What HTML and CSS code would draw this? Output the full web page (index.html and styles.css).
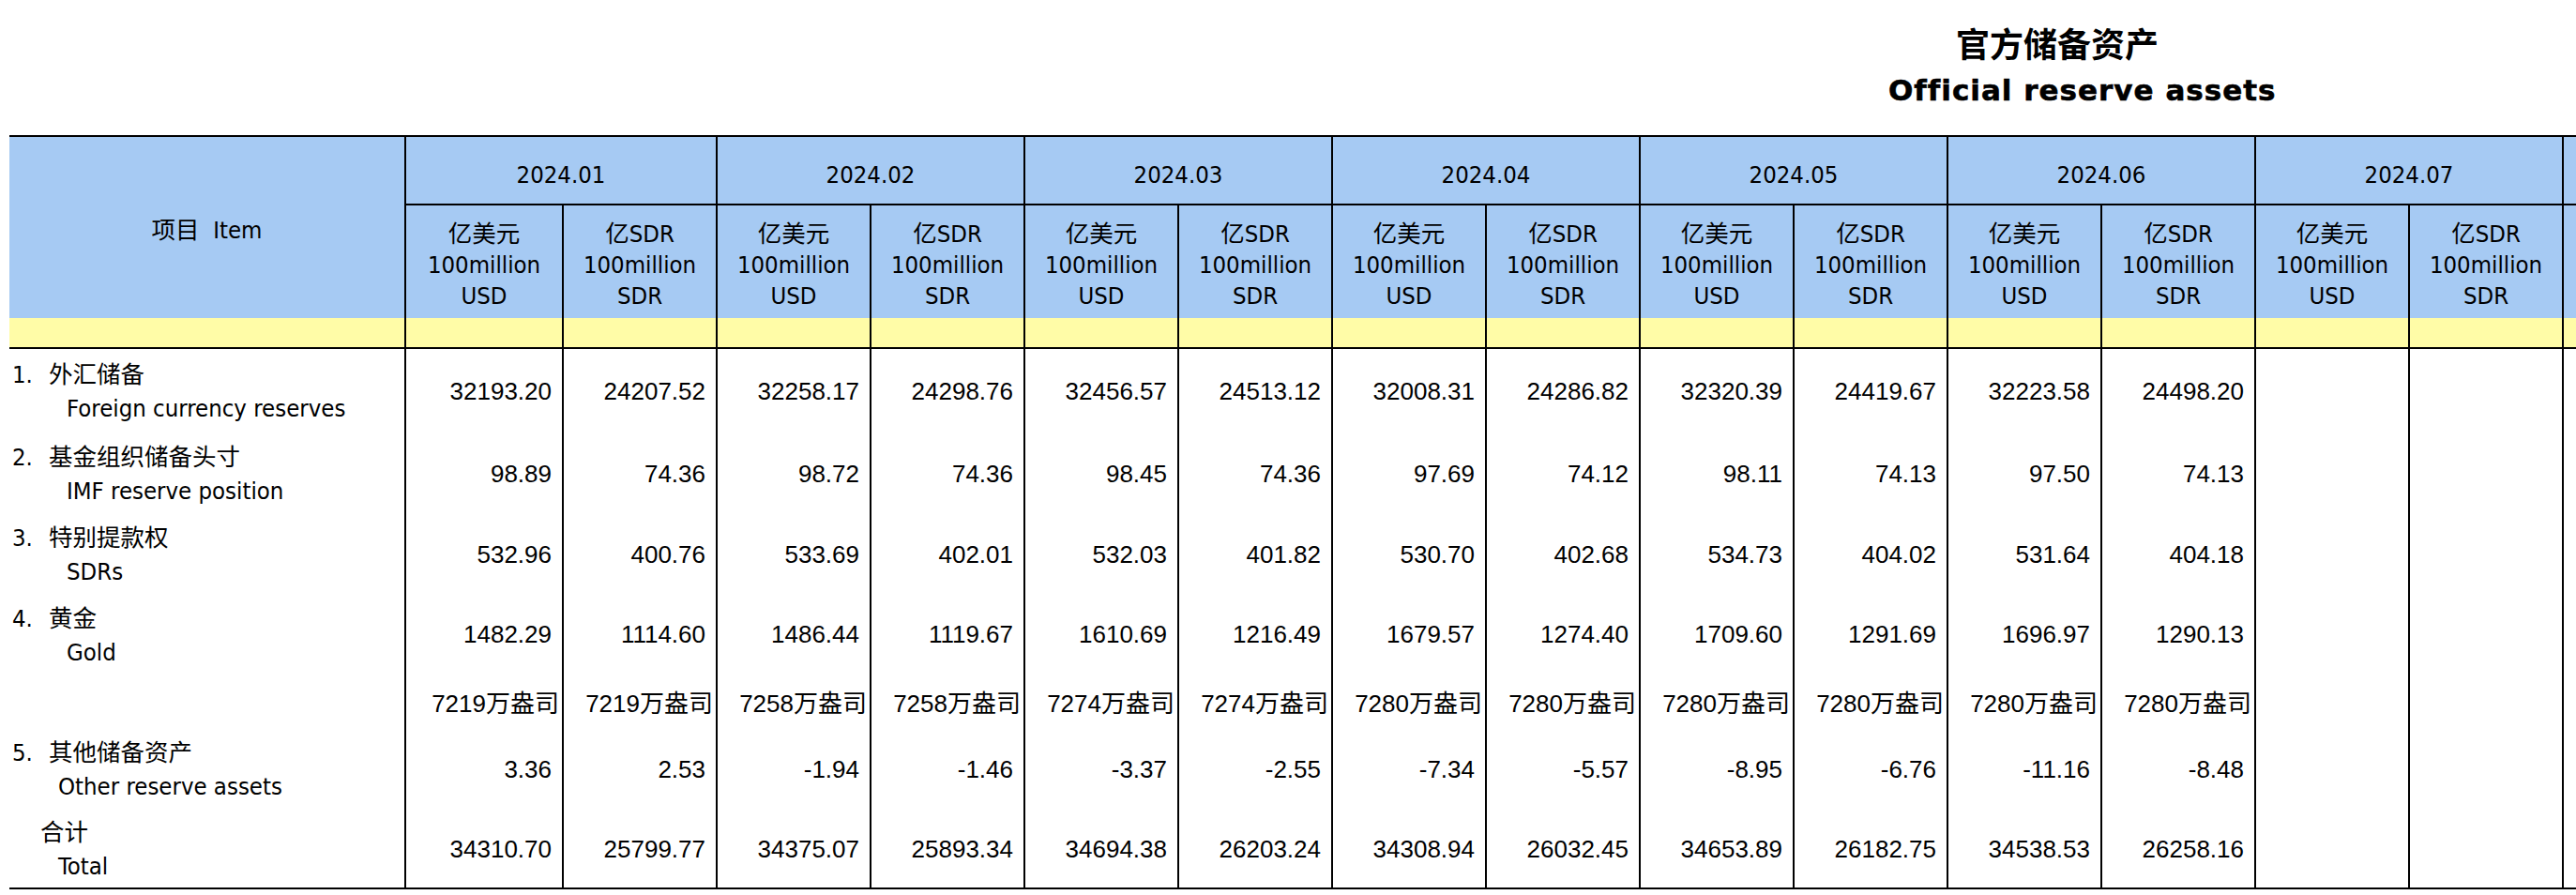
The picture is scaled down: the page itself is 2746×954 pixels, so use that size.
FILE: index.html
```html
<!DOCTYPE html>
<html lang="zh-CN">
<head>
<meta charset="utf-8">
<title>官方储备资产 Official reserve assets</title>
<link rel="stylesheet" href="styles.css">
</head>
<body>
<header class="title">
  <div class="title-cn">官方储备资产</div>
  <div class="title-en">Official reserve assets</div>
</header>
<table class="sheet">
  <colgroup>
    <col class="c-item">
    <col class="c-first"><col class="c-sub">
    <col class="c-sub"><col class="c-sub">
    <col class="c-sub"><col class="c-sub">
    <col class="c-sub"><col class="c-sub">
    <col class="c-sub"><col class="c-sub">
    <col class="c-sub"><col class="c-sub">
    <col class="c-sub"><col class="c-sub">
    <col class="c-sub"><col class="c-sub">
  </colgroup>
  <thead>
    <tr class="h1">
      <th class="item-head" rowspan="2">项目&nbsp;&nbsp;Item</th>
      <th class="date" colspan="2">2024.01</th>
      <th class="date" colspan="2">2024.02</th>
      <th class="date" colspan="2">2024.03</th>
      <th class="date" colspan="2">2024.04</th>
      <th class="date" colspan="2">2024.05</th>
      <th class="date" colspan="2">2024.06</th>
      <th class="date" colspan="2">2024.07</th>
      <th class="date" colspan="2"></th>
    </tr>
    <tr class="h2">
      <th class="unit">亿美元<br>100million<br>USD</th><th class="unit">亿SDR<br>100million<br>SDR</th>
      <th class="unit">亿美元<br>100million<br>USD</th><th class="unit">亿SDR<br>100million<br>SDR</th>
      <th class="unit">亿美元<br>100million<br>USD</th><th class="unit">亿SDR<br>100million<br>SDR</th>
      <th class="unit">亿美元<br>100million<br>USD</th><th class="unit">亿SDR<br>100million<br>SDR</th>
      <th class="unit">亿美元<br>100million<br>USD</th><th class="unit">亿SDR<br>100million<br>SDR</th>
      <th class="unit">亿美元<br>100million<br>USD</th><th class="unit">亿SDR<br>100million<br>SDR</th>
      <th class="unit">亿美元<br>100million<br>USD</th><th class="unit">亿SDR<br>100million<br>SDR</th>
      <th class="unit"></th><th class="unit"></th>
    </tr>
    <tr class="yel">
      <td></td><td></td><td></td><td></td><td></td><td></td><td></td><td></td><td></td><td></td><td></td><td></td><td></td><td></td><td></td><td></td><td></td>
    </tr>
  </thead>
  <tbody>
    <tr class="r1">
      <td class="item"><div class="l1"><span class="num">1.</span>外汇储备</div><div class="l2">Foreign currency reserves</div></td>
      <td>32193.20</td><td>24207.52</td><td>32258.17</td><td>24298.76</td><td>32456.57</td><td>24513.12</td><td>32008.31</td><td>24286.82</td><td>32320.39</td><td>24419.67</td><td>32223.58</td><td>24498.20</td><td></td><td></td><td></td><td></td>
    </tr>
    <tr class="r2">
      <td class="item"><div class="l1"><span class="num">2.</span>基金组织储备头寸</div><div class="l2">IMF reserve position</div></td>
      <td>98.89</td><td>74.36</td><td>98.72</td><td>74.36</td><td>98.45</td><td>74.36</td><td>97.69</td><td>74.12</td><td>98.11</td><td>74.13</td><td>97.50</td><td>74.13</td><td></td><td></td><td></td><td></td>
    </tr>
    <tr class="r3">
      <td class="item"><div class="l1"><span class="num">3.</span>特别提款权</div><div class="l2">SDRs</div></td>
      <td>532.96</td><td>400.76</td><td>533.69</td><td>402.01</td><td>532.03</td><td>401.82</td><td>530.70</td><td>402.68</td><td>534.73</td><td>404.02</td><td>531.64</td><td>404.18</td><td></td><td></td><td></td><td></td>
    </tr>
    <tr class="r4">
      <td class="item"><div class="l1"><span class="num">4.</span>黄金</div><div class="l2">Gold</div></td>
      <td>1482.29</td><td>1114.60</td><td>1486.44</td><td>1119.67</td><td>1610.69</td><td>1216.49</td><td>1679.57</td><td>1274.40</td><td>1709.60</td><td>1291.69</td><td>1696.97</td><td>1290.13</td><td></td><td></td><td></td><td></td>
    </tr>
    <tr class="oz">
      <td class="item"></td>
      <td>7219万盎司</td><td>7219万盎司</td><td>7258万盎司</td><td>7258万盎司</td><td>7274万盎司</td><td>7274万盎司</td><td>7280万盎司</td><td>7280万盎司</td><td>7280万盎司</td><td>7280万盎司</td><td>7280万盎司</td><td>7280万盎司</td><td></td><td></td><td></td><td></td>
    </tr>
    <tr class="r5">
      <td class="item"><div class="l1"><span class="num">5.</span>其他储备资产</div><div class="l2 l2-short">Other reserve assets</div></td>
      <td>3.36</td><td>2.53</td><td>-1.94</td><td>-1.46</td><td>-3.37</td><td>-2.55</td><td>-7.34</td><td>-5.57</td><td>-8.95</td><td>-6.76</td><td>-11.16</td><td>-8.48</td><td></td><td></td><td></td><td></td>
    </tr>
    <tr class="tot">
      <td class="item"><div class="l1 l1-total">合计</div><div class="l2 l2-short">Total</div></td>
      <td>34310.70</td><td>25799.77</td><td>34375.07</td><td>25893.34</td><td>34694.38</td><td>26203.24</td><td>34308.94</td><td>26032.45</td><td>34653.89</td><td>26182.75</td><td>34538.53</td><td>26258.16</td><td></td><td></td><td></td><td></td>
    </tr>
  </tbody>
</table>
</body>
</html>
```
FILE: styles.css
```css
html, body {
  margin: 0;
  padding: 0;
  background: #ffffff;
  overflow: hidden;
}

body {
  width: 2746px;
  height: 954px;
  color: #000;
  font-family: "DejaVu Sans Condensed", "Liberation Sans", "Noto Sans CJK SC", sans-serif;
}

.title {
  height: 144px;
  box-sizing: border-box;
  padding-top: 20px;
}

.title-cn {
  padding-left: 2085px;
  font-family: "Noto Sans CJK SC", sans-serif;
  font-weight: 700;
  font-size: 36px;
  line-height: 50px;
  white-space: nowrap;
}

.title-en {
  padding-left: 2013px;
  font-family: "DejaVu Sans", "Noto Sans CJK SC", sans-serif;
  font-weight: 700;
  font-size: 31px;
  line-height: 52px;
  letter-spacing: 1px;
  white-space: nowrap;
  -webkit-text-stroke: 0.6px #000;
}

.sheet {
  margin-left: 10px;
  border-collapse: collapse;
  table-layout: fixed;
  width: 3050px;
}

.c-item { width: 422px; }
.c-first { width: 168px; }
.c-sub { width: 164px; }

.sheet th,
.sheet td {
  padding: 0;
  border-left: 2px solid #000;
}

.sheet th:first-child,
.sheet td:first-child {
  border-left: none;
}

.sheet .h2 th:first-child {
  border-left: 2px solid #000;
}

.sheet thead th {
  background: #a6caf3;
  font-weight: 400;
  text-align: center;
  font-size: 25.5px;
  font-family: "DejaVu Sans Condensed", "Liberation Sans", "Noto Sans CJK SC", sans-serif;
}

.sheet .h1 th {
  border-top: 2px solid #000;
  height: 73px;
}

.sheet .h1 .date {
  border-bottom: 2px solid #000;
  padding-top: 8px;
  box-sizing: border-box;
  vertical-align: middle;
}

.item-head {
  vertical-align: middle;
  white-space: nowrap;
}

.sheet .h2 th {
  height: 121px;
  line-height: 33px;
  padding-top: 6px;
  box-sizing: border-box;
  vertical-align: middle;
}

.sheet .yel td {
  background: #fffca7;
  height: 31px;
  border-bottom: 2px solid #000;
}

.sheet tbody td {
  text-align: right;
  padding-right: 11px;
  vertical-align: middle;
  font-family: "Liberation Sans", "Noto Sans CJK SC", sans-serif;
  font-size: 26px;
  white-space: nowrap;
}

.sheet tbody td.item {
  text-align: left;
  padding-left: 3px;
  padding-right: 0;
  font-family: "DejaVu Sans Condensed", "Liberation Sans", "Noto Sans CJK SC", sans-serif;
  font-size: 25.5px;
}

.l1,
.l2 {
  line-height: 36px;
  white-space: nowrap;
}

.num {
  display: inline-block;
  width: 39px;
}

.l2 { padding-left: 58px; }
.l2-short { padding-left: 49px; }
.l1-total { padding-left: 30px; }

.sheet .r1 td { height: 90px; }
.sheet .r2 td { height: 86px; }
.sheet .r3 td { height: 86px; }
.sheet .r4 td { height: 85px; }
.sheet .oz td { height: 57px; padding-right: 3px; }
.sheet .r5 td { height: 88px; }
.sheet .tot td {
  height: 82px;
  border-bottom: 2px solid #000;
}
```
